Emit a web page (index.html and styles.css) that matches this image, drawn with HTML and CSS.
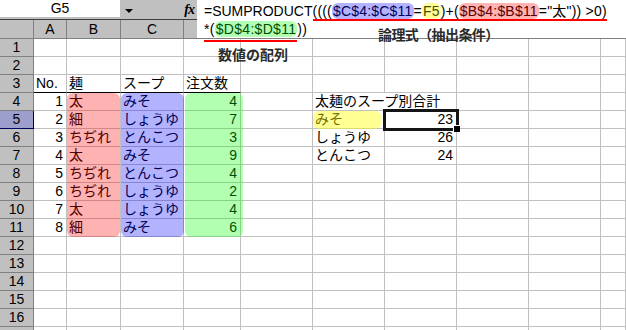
FILE: index.html
```html
<!DOCTYPE html>
<html lang="ja">
<head>
<meta charset="utf-8">
<title>SUMPRODUCT</title>
<link rel="stylesheet" href="styles.css">
</head>
<body>
<div class="page">
  <div class="topbar">
    <div class="namebox">G5</div>
    <div class="tools">
      <span class="drop"></span>
      <span class="fx">fx</span>
    </div>
  </div>

  <div class="sheet">
    <div class="row head">
      <div class="ch corner"></div><div class="ch">A</div><div class="ch">B</div><div class="ch">C</div><div class="ch">D</div><div class="ch">E</div><div class="ch">F</div><div class="ch">G</div><div class="ch">H</div><div class="ch">I</div><div class="ch">J</div>
    </div>
    <div class="row"><div class="rh">1</div><div class="c"></div><div class="c"></div><div class="c"></div><div class="c"></div><div class="c"></div><div class="c"></div><div class="c"></div><div class="c"></div><div class="c"></div><div class="c"></div></div>
    <div class="row"><div class="rh">2</div><div class="c"></div><div class="c"></div><div class="c"></div><div class="c"></div><div class="c"></div><div class="c"></div><div class="c"></div><div class="c"></div><div class="c"></div><div class="c"></div></div>
    <div class="row"><div class="rh">3</div><div class="c th">No.</div><div class="c th">麺</div><div class="c th">スープ</div><div class="c th">注文数</div><div class="c"></div><div class="c"></div><div class="c"></div><div class="c"></div><div class="c"></div><div class="c"></div></div>
    <div class="row"><div class="rh">4</div><div class="c n">1</div><div class="c">太</div><div class="c">みそ</div><div class="c n">4</div><div class="c"></div><div class="c over">太麺のスープ別合計</div><div class="c"></div><div class="c"></div><div class="c"></div><div class="c"></div></div>
    <div class="row"><div class="rh sel">5</div><div class="c n">2</div><div class="c">細</div><div class="c">しょうゆ</div><div class="c n">7</div><div class="c"></div><div class="c">みそ</div><div class="c n active">23</div><div class="c"></div><div class="c"></div><div class="c"></div></div>
    <div class="row"><div class="rh">6</div><div class="c n">3</div><div class="c">ちぢれ</div><div class="c">とんこつ</div><div class="c n">3</div><div class="c"></div><div class="c">しょうゆ</div><div class="c n">26</div><div class="c"></div><div class="c"></div><div class="c"></div></div>
    <div class="row"><div class="rh">7</div><div class="c n">4</div><div class="c">太</div><div class="c">みそ</div><div class="c n">9</div><div class="c"></div><div class="c">とんこつ</div><div class="c n">24</div><div class="c"></div><div class="c"></div><div class="c"></div></div>
    <div class="row"><div class="rh">8</div><div class="c n">5</div><div class="c">ちぢれ</div><div class="c">とんこつ</div><div class="c n">4</div><div class="c"></div><div class="c"></div><div class="c"></div><div class="c"></div><div class="c"></div><div class="c"></div></div>
    <div class="row"><div class="rh">9</div><div class="c n">6</div><div class="c">ちぢれ</div><div class="c">しょうゆ</div><div class="c n">2</div><div class="c"></div><div class="c"></div><div class="c"></div><div class="c"></div><div class="c"></div><div class="c"></div></div>
    <div class="row"><div class="rh">10</div><div class="c n">7</div><div class="c">太</div><div class="c">しょうゆ</div><div class="c n">4</div><div class="c"></div><div class="c"></div><div class="c"></div><div class="c"></div><div class="c"></div><div class="c"></div></div>
    <div class="row"><div class="rh">11</div><div class="c n">8</div><div class="c">細</div><div class="c">みそ</div><div class="c n">6</div><div class="c"></div><div class="c"></div><div class="c"></div><div class="c"></div><div class="c"></div><div class="c"></div></div>
    <div class="row"><div class="rh">12</div><div class="c"></div><div class="c"></div><div class="c"></div><div class="c"></div><div class="c"></div><div class="c"></div><div class="c"></div><div class="c"></div><div class="c"></div><div class="c"></div></div>
    <div class="row"><div class="rh">13</div><div class="c"></div><div class="c"></div><div class="c"></div><div class="c"></div><div class="c"></div><div class="c"></div><div class="c"></div><div class="c"></div><div class="c"></div><div class="c"></div></div>
    <div class="row"><div class="rh">14</div><div class="c"></div><div class="c"></div><div class="c"></div><div class="c"></div><div class="c"></div><div class="c"></div><div class="c"></div><div class="c"></div><div class="c"></div><div class="c"></div></div>
    <div class="row"><div class="rh">15</div><div class="c"></div><div class="c"></div><div class="c"></div><div class="c"></div><div class="c"></div><div class="c"></div><div class="c"></div><div class="c"></div><div class="c"></div><div class="c"></div></div>
    <div class="row"><div class="rh">16</div><div class="c"></div><div class="c"></div><div class="c"></div><div class="c"></div><div class="c"></div><div class="c"></div><div class="c"></div><div class="c"></div><div class="c"></div><div class="c"></div></div>
    <div class="row"><div class="rh">17</div><div class="c"></div><div class="c"></div><div class="c"></div><div class="c"></div><div class="c"></div><div class="c"></div><div class="c"></div><div class="c"></div><div class="c"></div><div class="c"></div></div>
  </div>

  <div class="mark m-pink"></div>
  <div class="mark m-blue"></div>
  <div class="mark m-green"></div>
  <div class="mark m-yellow"></div>

  <div class="formula">
    <div class="fline">=SUMPRODUCT<span class="ul">((((<span class="hl blue">$C$4:$C$11</span>=<span class="hl yellow">F5</span>)+(<span class="hl pink">$B$4:$B$11</span>="太")) &gt;0)</span></div>
    <div class="fline l2"><span class="ul ul2">*(<span class="hl green">$D$4:$D$11</span></span>))</div>
  </div>

  <div class="note note-array">数値の配列</div>
  <div class="note note-logic">論理式（抽出条件）</div>
</div>
</body>
</html>
```

FILE: styles.css
```css
* { box-sizing: border-box; }
html, body { margin: 0; padding: 0; background: #fff; }
body {
  width: 626px;
  height: 330px;
  overflow: hidden;
  font-family: "Liberation Sans", "Noto Sans CJK JP", sans-serif;
  font-size: 14px;
  color: #000;
}
.page { position: relative; width: 626px; height: 330px; overflow: hidden; }

/* name box / tool strip */
.topbar {
  display: flex;
  height: 20px;
  background: #c0c0c0;
  border-bottom: 1px solid #404040;
}
.namebox {
  width: 120px;
  height: 17px;
  background: #fff;
  text-align: center;
  line-height: 17px;
}
.tools { width: 77px; display: flex; align-items: flex-start; }
.drop {
  margin: 9px 0 0 5px;
  width: 0; height: 0;
  border-left: 4px solid transparent;
  border-right: 4px solid transparent;
  border-top: 4px solid #000;
}
.fx {
  margin-left: auto;
  margin-right: 3px;
  font-family: "Liberation Serif", serif;
  font-style: italic;
  font-weight: bold;
  font-size: 14px;
  line-height: 19px;
  letter-spacing: -1px;
}

/* grid */
.row {
  display: grid;
  grid-template-columns: 34px 33px 54px 63px 57px 72px 72px 72px 72px 72px 25px;
  height: 18px;
}
.row.head { height: 19px; }
.ch, .rh {
  background: #c0c0c0;
  border-right: 1px solid #808080;
  border-bottom: 1px solid #808080;
  text-align: center;
  line-height: 17px;
}
.ch { line-height: 18px; }
.rh.sel {
  background: #9e9ecc;
  border-right-color: #000060;
  border-bottom-color: #000060;
}
.c {
  border-right: 1px solid #c0c0c0;
  border-bottom: 1px solid #c0c0c0;
  padding: 0 2px;
  line-height: 17px;
  white-space: nowrap;
}
.c.n { text-align: right; padding-right: 3px; }
.c.th { border-bottom-color: #000; }
.c.over { border-right-color: transparent; overflow: visible; position: relative; z-index: 1; }
.c.active {
  position: relative;
  z-index: 3;
  outline: 3px solid #141414;
  outline-offset: -1px;
}
.c.active::after {
  content: "";
  position: absolute;
  right: -4px;
  bottom: -4px;
  width: 6px;
  height: 6px;
  background: #000;
  border-left: 1px solid #fff;
  border-top: 1px solid #fff;
}

/* translucent highlight shapes over the cells */
.mark { position: absolute; z-index: 2; border-radius: 6px; }
.m-pink   { left: 67px;  top: 93px;  width: 53px; height: 144px; background: rgba(255, 0, 0, 0.3); }
.m-blue   { left: 121px; top: 93px;  width: 63px; height: 144px; background: rgba(0, 0, 255, 0.3); }
.m-green  { left: 185px; top: 93px;  width: 58px; height: 144px; background: rgba(0, 255, 0, 0.3); }
.m-yellow { left: 313px; top: 111px; width: 68px; height: 18px;  background: rgba(255, 255, 0, 0.42); }

/* expanded formula bar */
.formula {
  position: absolute;
  z-index: 4;
  left: 197px;
  top: 0;
  width: 429px;
  height: 38px;
  background: #fff;
  padding: 2px 0 0 7px;
  line-height: 18px;
  white-space: nowrap;
}
.fline { height: 18px; }
.fline .ul { letter-spacing: 0.2px; }
.fline.l2 { letter-spacing: 0.3px; }
.fline.l2 .ul { letter-spacing: 0.3px; }
.ul { border-bottom: 2px solid #f00; }
.ul2 { padding-bottom: 3px; }
.hl { border-radius: 6px; padding: 0 1px; }
.hl.blue   { background: #b3b3ff; color: #00005a; }
.hl.yellow { background: #ffff99; color: #4d4d00; }
.hl.pink   { background: #ffb3b3; color: #5a0000; }
.hl.green  { background: #b3ffb3; color: #004d00; }

/* bold annotations */
.note {
  position: absolute;
  z-index: 5;
  font-family: "Noto Sans CJK JP", sans-serif;
  font-weight: bold;
  font-size: 14px;
  line-height: 16px;
  color: #2b2b2b;
  white-space: nowrap;
}
.note-array { left: 218px; top: 46px; }
.note-logic { left: 378px; top: 26px; letter-spacing: -0.6px; }
```
